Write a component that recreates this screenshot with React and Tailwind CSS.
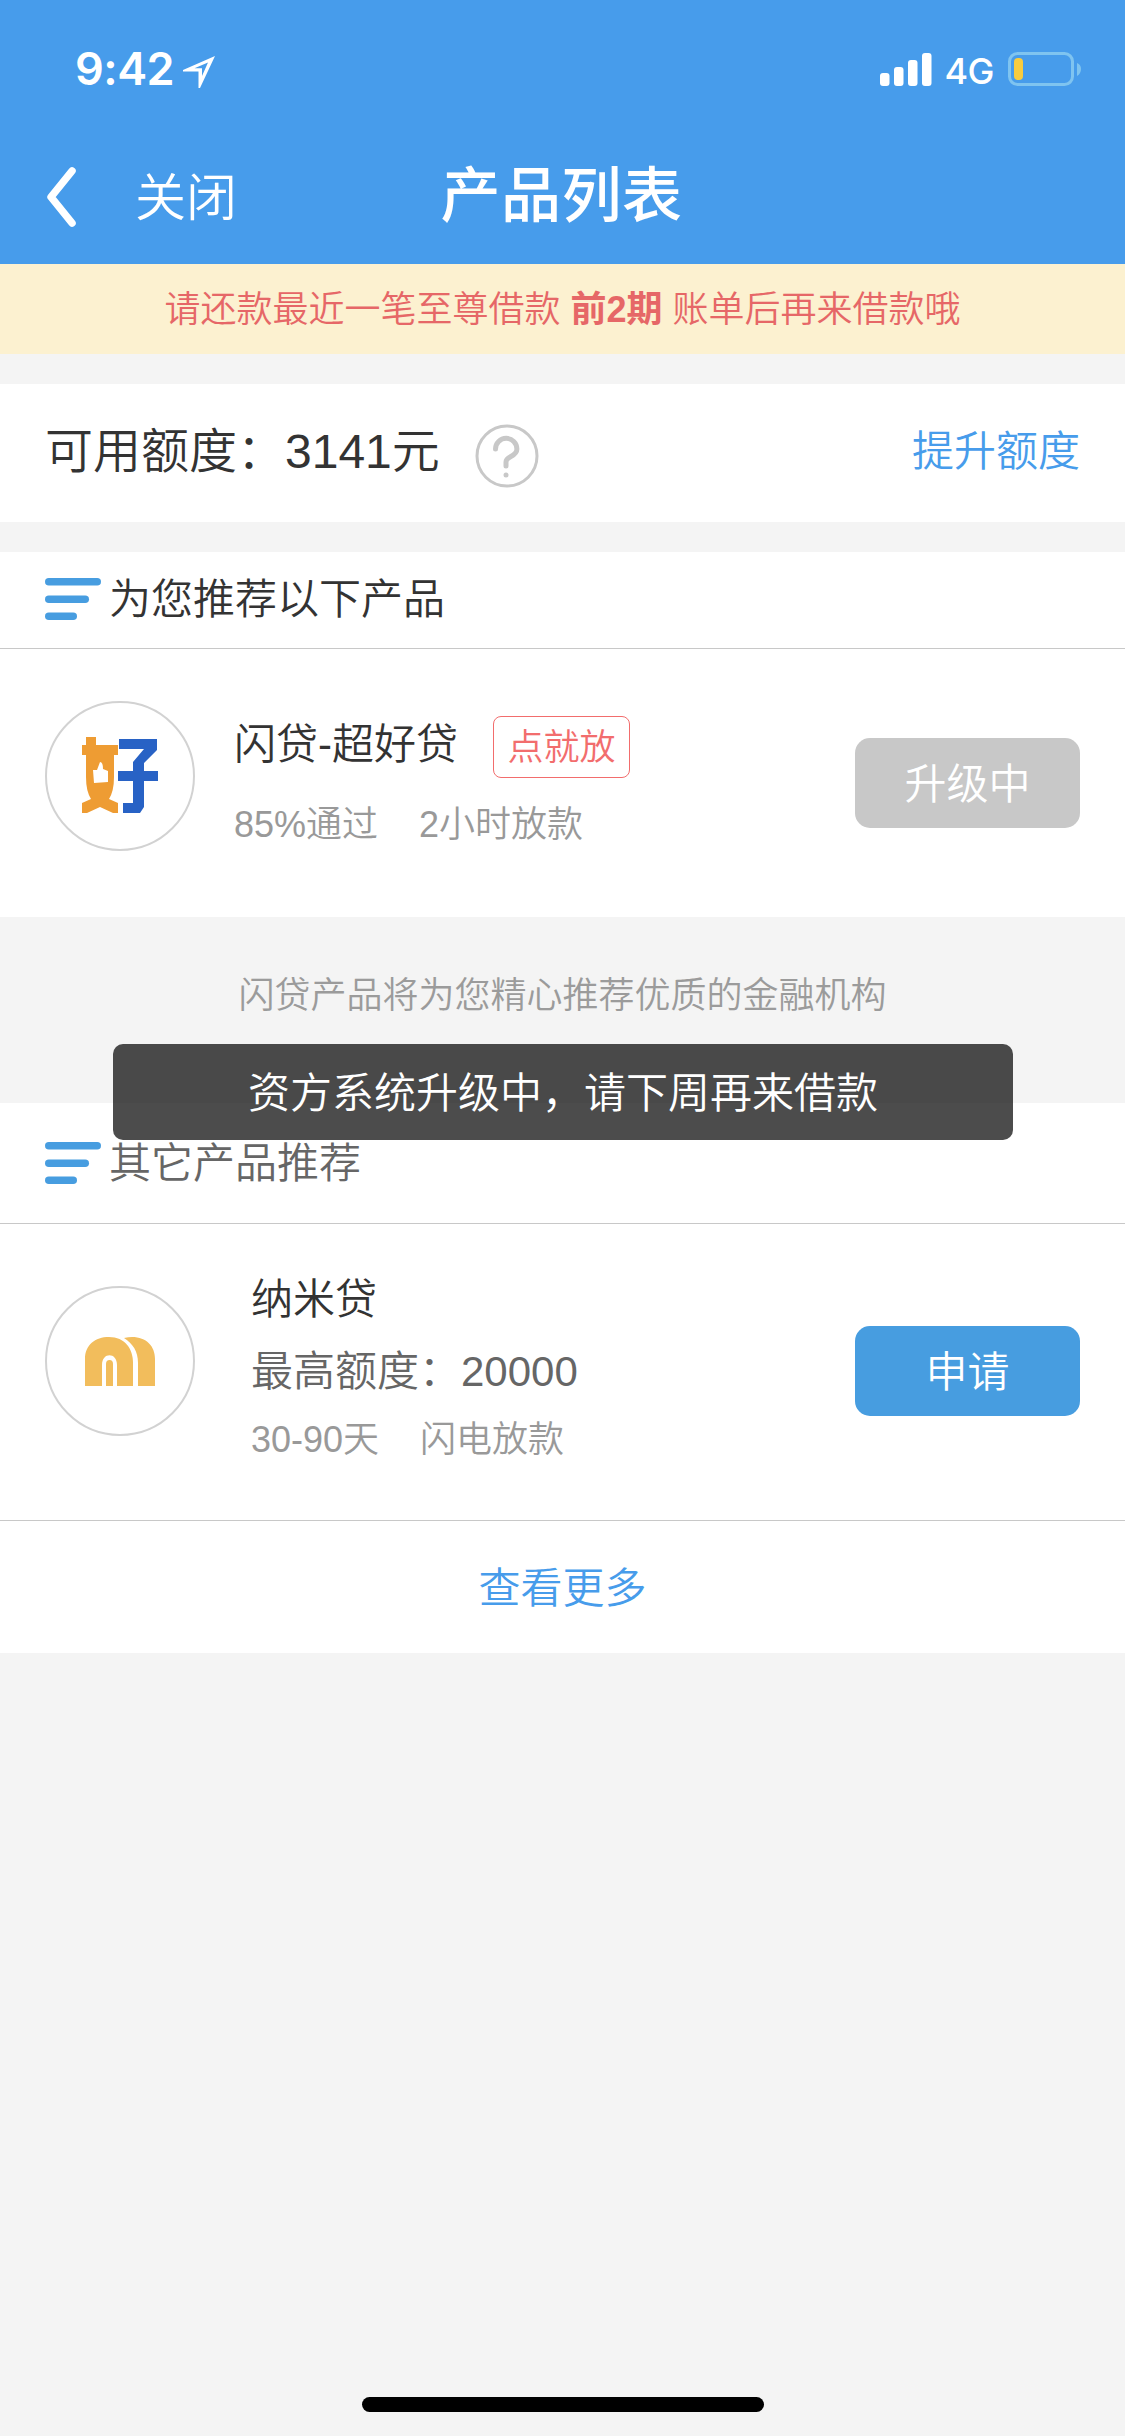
import React from "react";

const StatusBar = () => (
  <div className="flex h-[132px] items-start justify-between pl-[75px] pr-[43px] pt-[42px] text-white">
    <div className="flex items-center">
      <span className="font-['Inter',sans-serif] text-[45px] font-semibold leading-[54px] tracking-[-0.5px]">
        9:42
      </span>
      <svg className="ml-[9px] mt-2" width="32" height="34" viewBox="0 0 32 34" fill="currentColor">
        <path
          fillRule="evenodd"
          d="M32 0 L0 14 V15.500 H15.500 V32 H17 Z M25 6.500 L11.500 12.300 H19 V20 Z"
        />
      </svg>
    </div>
    <div className="flex h-[54px] items-center">
      <svg width="52" height="33" viewBox="0 0 52 33" fill="currentColor">
        <rect x="0" y="20" width="9.500" height="13" rx="3" />
        <rect x="14" y="14" width="9.500" height="19" rx="3" />
        <rect x="28" y="7" width="9.500" height="26" rx="3" />
        <rect x="42" y="0" width="9.500" height="33" rx="3" />
      </svg>
      <span className="ml-3 mr-[14px] pt-[3px] font-['Inter',sans-serif] text-[36px] font-[450] leading-[54px] tracking-[-0.5px]">
        4G
      </span>
      <svg width="74" height="36" viewBox="0 0 74 36" fill="none">
        <rect x="1.500" y="2.500" width="63" height="31" rx="8" stroke="#7fc4f0" strokeWidth="3" />
        <rect x="6" y="7" width="9" height="22" rx="4" fill="#f8cc3f" />
        <path d="M69 12 Q73 13.500 73 18 T69 25 Z" fill="#7fc4f0" />
      </svg>
    </div>
  </div>
);

const NavBar = () => (
  <div className="grid h-[132px] grid-cols-3 items-center px-[43px] text-white">
    <div className="flex items-center">
      <svg className="-mt-0.5" width="34" height="64" viewBox="0 0 34 64" fill="none">
        <path
          d="M29 6 L8 32 L29 58"
          stroke="currentColor"
          strokeWidth="7.500"
          strokeLinecap="round"
          strokeLinejoin="round"
        />
      </svg>
      <span className="ml-[58px] pt-0.5 text-[51px] leading-[60px]">关闭</span>
    </div>
    <h1 className="-ml-0.5 -mt-0.5 text-center text-[60px] font-medium leading-[72px] tracking-[0.5px]">
      产品列表
    </h1>
  </div>
);

const SectionTitle = ({ children }) => (
  <div className="flex items-center">
    <svg width="56" height="42" viewBox="0 0 56 42" fill="#479de0">
      <rect x="0" y="0" width="56" height="7.500" rx="3.750" />
      <rect x="0" y="17.500" width="44" height="7.500" rx="3.750" />
      <rect x="0" y="34.500" width="32" height="7.500" rx="3.750" />
    </svg>
    <span className="ml-2 pt-[3px] text-[42px] leading-[60px]">{children}</span>
  </div>
);

const HelpIcon = () => (
  <svg width="64" height="64" viewBox="0 0 64 64" fill="none" stroke="#c8c8c8">
    <circle cx="32" cy="32" r="30" strokeWidth="3" />
    <path
      d="M20.500 25 A10.700 10.700 0 0 1 41.900 25 C41.900 33 31 32 31 38 V42"
      strokeWidth="5"
      strokeLinecap="round"
    />
    <circle cx="31" cy="51" r="2.500" fill="#c8c8c8" stroke="none" />
  </svg>
);

const HaoLogo = () => (
  <svg width="76" height="78" viewBox="0 0 76 78">
    <path
      d="M4 0 H14 V8 H36 V18 H32 V40 Q32 54 27 62 L36 66 V76 H31 L18 70 L5 76 H0 V66 L9 62 Q4 54 4 40 V18 H0 V8 H4 Z"
      fill="#ee9c33"
    />
    <path d="M11 33 H15 L18 25 Q21 25 21 32 L26 34 V45 L12 46 Z" fill="#fff" />
    <path
      d="M37 2 H75 V13 L62 26 V34 H76 V44 H62 V70 L58 76 H41 V66 H51 V44 H36 V34 H51 V25 L62 12 H37 Z"
      fill="#2862c5"
    />
  </svg>
);

const NamiLogo = () => (
  <svg width="70" height="49" viewBox="0 0 70 49" fill="#f2bd5c">
    <path d="M0 49 V22 C0 8 10 0 24 0 C40 0 48 12 48 26 V49 H32 V28 C32 15 17 15 17 28 V49 Z" />
    <path d="M21 49 V27 Q21 23 24.500 23 T28 27 V49 Z" />
    <path d="M39 1 C58 -3 70 7 70 22 V49 H53 V26 C53 14 48 7 39 1 Z" />
  </svg>
);

const Avatar = ({ children }) => (
  <div className="flex h-[150px] w-[150px] shrink-0 items-center justify-center rounded-full border-2 border-[#d2d2d2]">
    {children}
  </div>
);

const App = () => {
  return (
    <div className="relative flex h-[2436px] w-[1125px] flex-col overflow-hidden bg-[#f4f4f4] font-['Liberation_Sans','Noto_Sans_CJK_SC',sans-serif] font-[350] text-[#333]">
      <header className="bg-[#479ceb]">
        <StatusBar />
        <NavBar />
      </header>

      <div className="flex h-[90px] items-center justify-center bg-[#fcf1d0] pt-[2px] text-[36px] leading-[54px] text-[#e66767]">
        <p>
          请还款最近一笔至尊借款 <b className="font-bold">前2期</b> 账单后再来借款哦
        </p>
      </div>

      <section className="mt-[30px] flex h-[138px] items-center justify-between bg-white px-[45px]">
        <div className="flex items-center">
          <span className="-mt-0.5 text-[48px] leading-[60px]">可用额度：3141元</span>
          <div className="ml-[35px] mt-[6px]">
            <HelpIcon />
          </div>
        </div>
        <a className="-mt-[3px] text-[42px] leading-[60px] text-[#479ceb]">提升额度</a>
      </section>

      <section className="mt-[30px] h-[365px] bg-white">
        <div className="h-[97px] border-b border-[#c8c8c8] px-[45px] pt-[15px]">
          <SectionTitle>为您推荐以下产品</SectionTitle>
        </div>
        <div className="flex items-start px-[45px] pt-[52px]">
          <Avatar>
            <HaoLogo />
          </Avatar>
          <div className="ml-[39px] grow pt-[15px]">
            <div className="flex items-center">
              <span className="-mt-1 text-[42px] leading-[60px]">闪贷-超好贷</span>
              <span className="ml-[35px] flex h-[62px] items-center rounded-lg border border-[#f26d6d] px-[13.5px] pt-0.5 text-[36px] text-[#f26d6d]">
                点就放
              </span>
            </div>
            <div className="mt-5 flex gap-[41px] text-[36px] leading-[54px] text-[#999]">
              <span>85%通过</span>
              <span>2小时放款</span>
            </div>
          </div>
          <button className="mt-[37px] h-[90px] w-[225px] rounded-[15px] bg-[#c8c8c8] pt-[3px] text-[42px] leading-[60px] text-white">
            升级中
          </button>
        </div>
      </section>

      <p className="h-[186px] pt-[52px] text-center text-[36px] leading-[54px] text-[#9b9b9b]">
        闪贷产品将为您精心推荐优质的金融机构
      </p>

      <section className="h-[550px] bg-white">
        <div className="h-[121px] border-b border-[#c8c8c8] px-[45px] pt-7 text-[#666]">
          <SectionTitle>其它产品推荐</SectionTitle>
        </div>
        <div className="flex h-[297px] items-start border-b border-[#c8c8c8] px-[45px] pt-[62px]">
          <Avatar>
            <NamiLogo />
          </Avatar>
          <div className="ml-14 grow -mt-4">
            <div className="text-[42px] leading-[60px]">纳米贷</div>
            <div className="mt-3 text-[42px] leading-[60px] text-[#666]">最高额度：20000</div>
            <div className="mt-[11px] flex gap-[41px] text-[36px] leading-[54px] text-[#999]">
              <span>30-90天</span>
              <span>闪电放款</span>
            </div>
          </div>
          <button className="mt-10 h-[90px] w-[225px] rounded-[15px] bg-[#479de0] pt-[3px] text-[42px] leading-[60px] text-white">
            申请
          </button>
        </div>
        <div className="flex h-[132px] items-center justify-center pt-[3px] text-[42px] leading-[60px] text-[#479ceb]">
          查看更多
        </div>
      </section>

      {/* toast */}
      <div className="absolute left-[113px] top-[1044px] flex h-24 w-[900px] items-center justify-center rounded-[10px] bg-black/70 pt-[3px] text-[42px] leading-[60px] text-white">
        资方系统升级中，请下周再来借款
      </div>

      <div className="mx-auto mb-6 mt-auto h-[15px] w-[402px] rounded-full bg-black" />
    </div>
  );
};

export default App;
